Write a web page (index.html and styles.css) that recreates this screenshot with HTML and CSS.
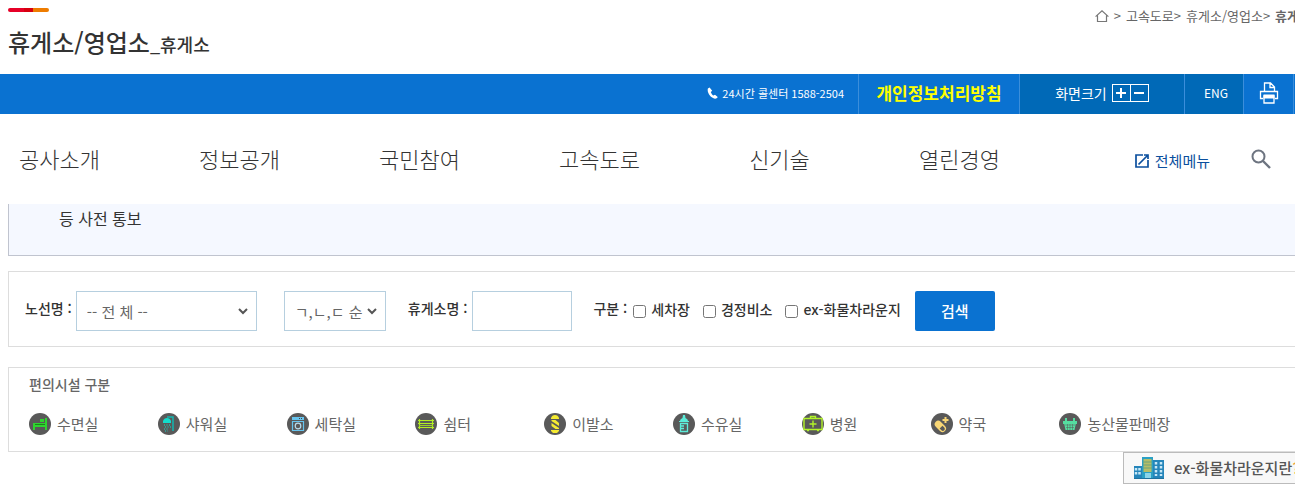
FILE: index.html
```html
<!DOCTYPE html>
<html lang="ko">
<head>
<meta charset="utf-8">
<title>휴게소/영업소</title>
<link rel="stylesheet" href="styles.css">
</head>
<body>
<div class="page">
  <header class="page-head">
    <div class="title-block">
      <svg class="title-mark" viewBox="0 0 41 4" aria-hidden="true"><rect width="30" height="4" rx="2" fill="#e60027"/><rect x="23" width="18" height="4" rx="2" fill="#ee7c00"/><rect x="16" width="9" height="4" fill="#d7000f"/></svg>
      <h1 class="title">휴게소/영업소<small class="title-sub">_휴게소</small></h1>
    </div>
    <nav class="crumbs" aria-label="현재 위치">
      <a class="crumb-home" href="#" aria-label="홈"><svg viewBox="0 0 14 12" aria-hidden="true"><path d="M.6 6.6 7 .8l6.400 5.800M2.500 5.500V11.500H11.500V5.500" fill="none" stroke="#777" stroke-width="1.200"/></svg></a>
      <span>&gt;</span><a href="#">고속도로&gt;</a><a href="#">휴게소/영업소&gt;</a><strong>휴게소</strong>
    </nav>
  </header>

  <div class="utility">
    <p class="util-tel"><svg class="tel-icon" viewBox="0 0 11 12" aria-hidden="true"><path d="M2.600.4.900 1.600C-.3 5.300 3.500 11.300 8 11.700c1 .1 2.300-.7 2.700-1.700L8 7.700l-1.600.9C5.200 7.900 4.200 6.400 3.800 5l1.400-1.200z" fill="#fff"/></svg>24시간 콜센터 1588-2504</p>
    <a class="util-privacy" href="#">개인정보처리방침</a>
    <div class="util-size">화면크기
      <div class="size-buttons">
        <button class="size-button" type="button" aria-label="확대"><svg viewBox="0 0 10 10" aria-hidden="true"><path d="M0 5h10M5 0v10" stroke="#fff" stroke-width="2"/></svg></button>
        <button class="size-button" type="button" aria-label="축소"><svg viewBox="0 0 10 10" aria-hidden="true"><path d="M0 5h10" stroke="#fff" stroke-width="2"/></svg></button>
      </div>
    </div>
    <a class="util-lang" href="#">ENG</a>
    <button class="util-print" type="button" aria-label="인쇄"><svg viewBox="0 0 20 22" aria-hidden="true"><g fill="none" stroke="#fff" stroke-width="1.300"><path d="M5.500 9.500V1h6l4 4v4.500M11 1v4.500h4.500M4 16.500H1.500v-7h17v7H16"/><path d="M5 14h10v7H5z"/></g><path d="M4.500 12.500h11v4h-11z" fill="#fff"/></svg></button>
  </div>

  <div class="main-nav">
    <nav class="menu" aria-label="주 메뉴">
      <a href="#">공사소개</a><a href="#">정보공개</a><a href="#">국민참여</a><a href="#">고속도로</a><a href="#">신기술</a><a href="#">열린경영</a>
    </nav>
    <a class="all-menu" href="#"><svg viewBox="0 0 14 14" aria-hidden="true"><path d="M8 1H1v12h12V6M3.500 10.500 12.500 1.500M9 1h4v4" fill="none" stroke="#0b4f9e" stroke-width="1.700"/></svg>전체메뉴</a>
    <button class="nav-search" type="button" aria-label="검색창 열기"><svg viewBox="0 0 20 20" aria-hidden="true"><circle cx="7.500" cy="7.500" r="6" fill="none" stroke="#6d7480" stroke-width="2"/><path d="m12 12 7 7" stroke="#6d7480" stroke-width="2.400"/></svg></button>
  </div>

  <main class="content">
    <div class="notice">등 사전 통보</div>

    <form class="search">
      <label class="field-label" for="route">노선명 :</label>
      <select class="field route" id="route"><option>-- 전 체 --</option></select>
      <select class="field order" aria-label="정렬"><option>ㄱ,ㄴ,ㄷ 순</option></select>
      <label class="field-label" for="name">휴게소명 :</label>
      <input class="field name" id="name" type="text">
      <fieldset class="kinds">
        <legend class="kinds-legend">구분 :</legend>
        <span class="kinds-list">
          <label class="kind"><input type="checkbox">세차장</label>
          <label class="kind"><input type="checkbox">경정비소</label>
          <label class="kind"><input type="checkbox">ex-화물차라운지</label>
        </span>
      </fieldset>
      <button class="submit" type="button">검색</button>
    </form>

    <section class="facilities">
      <h2 class="facilities-title">편의시설 구분</h2>
      <ul class="facility-list">
        <li><svg viewBox="0 0 22 22" aria-hidden="true"><circle cx="11" cy="11" r="11" fill="#595959"/><g fill="#2fd52f"><path d="M4 10h13v4H4zM16 5h2v12h-2zM4 10h2v7H4zM11 6h4v3h-4z"/></g><path d="M6 11.500h10" stroke="#178a17"/></svg>수면실</li>
        <li><svg viewBox="0 0 22 22" aria-hidden="true"><circle cx="11" cy="11" r="11" fill="#595959"/><path d="M5 10V8q1-3 4-3t4 3v2z" fill="#12dccb"/><path d="M9 4h6v14" fill="none" stroke="#12b5b0" stroke-width="1.500"/><path d="M6 12h7M7 14h6M6 16h5M7 18h3" stroke="#12dccb" stroke-dasharray="1 1.500"/></svg>샤워실</li>
        <li><svg viewBox="0 0 22 22" aria-hidden="true"><circle cx="11" cy="11" r="11" fill="#595959"/><path d="M5 4h12v3H5z" fill="#67c4ee"/><path d="M5.500 8.500h11v9h-11z" fill="none" stroke="#67c4ee" stroke-width="1.200"/><circle cx="11" cy="13" r="2.800" fill="none" stroke="#b8dcee" stroke-width="1.200"/><path d="M12 5.500h4" stroke="#444" stroke-dasharray="1 1"/></svg>세탁실</li>
        <li><svg viewBox="0 0 22 22" aria-hidden="true"><circle cx="11" cy="11" r="11" fill="#595959"/><path d="M3 7.500h16M3 10.500h16M3 14.500h16M4.500 6v10M17.500 6v10" stroke="#b3ee22" stroke-width="1.200"/><path d="M4 12.500h14" stroke="#98cb2e"/></svg>쉼터</li>
        <li><svg viewBox="0 0 22 22" aria-hidden="true"><circle cx="11" cy="11" r="11" fill="#595959"/><g fill="#f4ea31"><path d="M7 5q1-3 4-3t4 3v1H7zM7 17h8v1l-2 2H9l-2-2zM7.500 7h4l3.500 3v3l-7.500-5zM7.500 10l7.500 5v1h-3.500l-4-3z"/></g></svg>이발소</li>
        <li><svg viewBox="0 0 22 22" aria-hidden="true"><circle cx="11" cy="11" r="11" fill="#595959"/><path d="M7 8q0-2 2.500-3l.5-3h2l.5 3Q15 6 15 8h1v1H6V8z" fill="#5cecd9"/><path d="M7.500 10.500h7v8h-7zM7 13h4M7 15.500h4" fill="none" stroke="#5cecd9" stroke-width="1.300"/></svg>수유실</li>
        <li><svg viewBox="0 0 22 22" aria-hidden="true"><circle cx="11" cy="11" r="11" fill="#595959"/><path d="M2 5.500h18v11H2zM8.500 5V3.500h5V5M11 7.500v7M7.500 11h7M5 17.500h2M15 17.500h2" fill="none" stroke="#b1f329" stroke-width="1.400"/></svg>병원</li>
        <li><svg viewBox="0 0 22 22" aria-hidden="true"><circle cx="11" cy="11" r="11" fill="#595959"/><g transform="rotate(45 9 13)"><rect x="3" y="9.500" width="13" height="7" rx="3.500" fill="#f8d675"/><path d="M10.500 11h2.500a2 2 0 0 1 0 4h-2.500z" fill="#595959"/></g><path d="M14.500 4v6M11.500 7h6" stroke="#f8d675" stroke-width="2"/></svg>약국</li>
        <li><svg viewBox="0 0 22 22" aria-hidden="true"><circle cx="11" cy="11" r="11" fill="#595959"/><path d="M4 8h14v3H4zM5 10h12l-1.500 7h-9zM6 5h2v4H6zM14 5h2v4h-2z" fill="#55dda0"/><path d="M6 12h10M7 14.500h8M8.500 11v6M11 11v6M13.500 11v6" stroke="#595959" stroke-width=".5"/></svg>농산물판매장</li>
      </ul>
    </section>

    <a class="lounge" href="#"><svg viewBox="0 0 30 22" aria-hidden="true"><path d="M0 9h8v12H0zM19 3h11v18H19z" fill="#2585ba"/><path d="M8 0h11v21H8z" fill="#2aa0c4"/><path d="M9.500 2h8v13h-8z" fill="#b5bd68"/><path d="M9 5h9M9 8h9M9 11h9" stroke="#6da37b"/><path d="M2 11v8M5.500 11v8M22 5v14M27 5v14" stroke="#c6e7f6" stroke-width="2.500" stroke-dasharray="2.500 1.500"/><path d="M11 16h6v5h-6z" fill="#8bd4e8"/><path d="M0 21.500h30" stroke="#1e729f"/></svg><span>ex-화물차라운지란<span class="lounge-mark">?</span></span></a>
  </main>
</div>
</body>
</html>
```
FILE: styles.css
```css
* { box-sizing: border-box; }

body {
  margin: 0;
  background: #fff;
  color: #333;
  font: 14px/20px "Noto Sans CJK KR", sans-serif;
}

h1, h2, p, ul { margin: 0; padding: 0; }
ul { list-style: none; }
a { color: inherit; text-decoration: none; }
button { font: inherit; color: inherit; border: 0; padding: 0; background: none; cursor: pointer; }
svg { display: block; flex: none; }

.page { overflow: hidden; white-space: nowrap; }

.page-head {
  display: flex;
  justify-content: space-between;
  align-items: flex-start;
  height: 74px;
  padding: 8px 0 0 8px;
}
.title-mark { width: 41px; height: 4px; }
.title { margin-top: 12px; font-size: 24px; line-height: 36px; font-weight: 500; }
.title-sub { font-size: 18px; font-weight: 500; }

.crumbs {
  display: flex;
  align-items: center;
  gap: 5px;
  margin-right: -16px;
  color: #666;
  font-size: 13px;
  line-height: 16px;
}
.crumb-home svg { width: 14px; height: 12px; }

.utility {
  display: flex;
  justify-content: flex-end;
  height: 40px;
  padding-right: 1px;
  background: #0a72d1;
  color: #fff;
}
.utility > * { display: flex; align-items: center; justify-content: center; padding-bottom: 2px; }
.utility .util-tel { gap: 4px; padding-right: 14px; font-size: 11px; }
.tel-icon { width: 11px; height: 12px; }
.util-privacy {
  width: 161px;
  border-left: 1px solid #3b8edb;
  color: #ff0;
  font-size: 17px;
  font-weight: 700;
}
.util-size {
  gap: 5px;
  width: 165px;
  border-left: 1px solid #3b8edb;
  background: #0069b7;
}
.size-buttons { display: flex; border: 1px solid #fff; }
.size-button { display: grid; place-items: center; width: 17px; height: 16px; }
.size-button + .size-button { width: 18px; border-left: 1px solid #fff; }
.size-button svg { width: 10px; height: 10px; }
.util-lang { width: 59px; border-left: 1px solid #3b8edb; background: #0069b7; font-size: 12px; padding-left: 4px; }
.util-print { width: 51px; border: solid #3b8edb; border-width: 0 1px; }
.util-print svg { width: 20px; height: 22px; }

.main-nav {
  display: flex;
  align-items: center;
  height: 90px;
  padding: 0 24px 0 19px;
}
.menu { display: flex; gap: 99px; padding-bottom: 2px; font-size: 22px; line-height: 32px; font-weight: 300; }
.menu a { min-width: 81px; text-align: center; }
.all-menu {
  display: flex;
  align-items: center;
  gap: 6px;
  margin-left: auto;
  padding-top: 4px;
  color: #0b4f9e;
  font-size: 15px;
}
.all-menu svg { width: 14px; height: 14px; }
.nav-search { margin-left: 41px; }
.nav-search svg { width: 20px; height: 20px; }

.content { padding-left: 8px; }

.notice {
  padding: 4px 50px 27px;
  border: solid #c0c4cf;
  border-width: 0 0 1px 1px;
  background: #f5f8ff;
  font-size: 16px;
}

.search {
  display: flex;
  align-items: center;
  margin-top: 15px;
  padding: 19px 0 15px 16px;
  border: solid #ddd;
  border-width: 1px 0 1px 1px;
  font-weight: 500;
}
.field-label, .kinds-legend { padding-bottom: 6px; }
.field {
  height: 40px;
  margin-left: 4px;
  padding: 0 10px;
  border: 1px solid #b6cfdf;
  border-radius: 0;
  background: #fff;
  color: #666;
  font: 15px "Noto Sans CJK KR", sans-serif;
}
select.field {
  appearance: none;
  background: #fff url("data:image/svg+xml,%3Csvg xmlns='http://www.w3.org/2000/svg' width='10' height='7'%3E%3Cpath d='M1 1l4 4 4-4' fill='none' stroke='%23555' stroke-width='2'/%3E%3C/svg%3E") no-repeat right 8px center;
}
.route { width: 181px; }
.field.order { width: 102px; margin: 0 22px 0 27px; padding-right: 18px; }
.field.name { width: 100px; margin-left: 5px; }
.kinds {
  display: flex;
  align-items: center;
  margin: 0 14px 0 21px;
  padding: 0;
  border: 0;
}
.kinds-legend { float: left; padding-left: 0; padding-right: 6px; }
.kinds-list { display: flex; gap: 13px; }
.kind { display: flex; align-items: center; gap: 5px; padding-bottom: 4px; }
.kind input { width: 13px; height: 13px; margin: 4px 0 0; }
.submit {
  width: 80px;
  height: 40px;
  border-radius: 2px;
  background: #0a72d1;
  color: #fff;
  font-size: 15px;
  font-weight: 500;
}

.facilities {
  margin-top: 20px;
  padding: 6px 0 16px 20px;
  border: solid #ddd;
  border-width: 1px 0 1px 1px;
  color: #666;
}
.facilities-title { font-size: 14px; font-weight: 500; }
.facility-list {
  display: grid;
  grid-template-columns: repeat(10, 1fr);
  margin: 19px -22px 0 0;
  font-size: 15px;
  line-height: 22px;
}
.facility-list li { display: flex; align-items: center; gap: 6px; }
.facility-list svg { width: 22px; height: 22px; }

.lounge {
  display: flex;
  align-items: center;
  gap: 10px;
  width: 182px;
  height: 32px;
  margin: 0 -10px 0 auto;
  padding-left: 10px;
  border: 1px solid #bbb;
  background: #f8f8f8;
  color: #555;
  font-size: 15px;
  font-weight: 500;
}
.lounge svg { width: 30px; height: 22px; }
.lounge-mark { color: #efa633; }
```
